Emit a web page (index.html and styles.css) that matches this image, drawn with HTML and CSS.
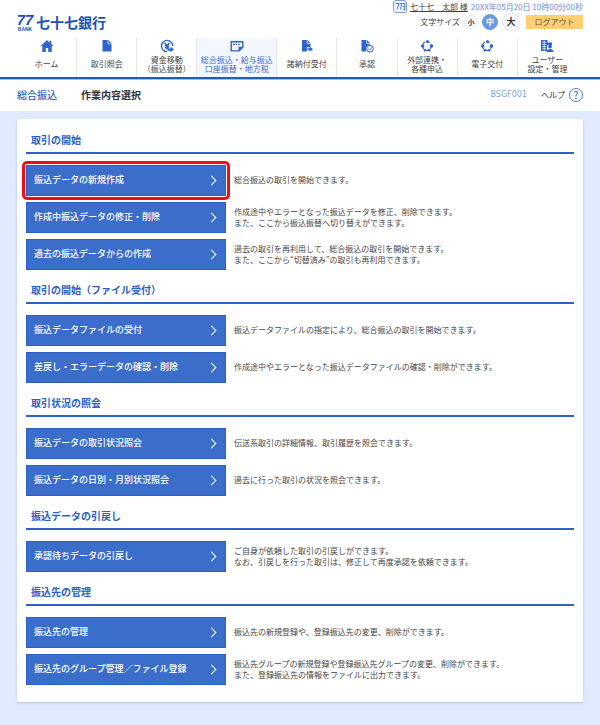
FILE: index.html
```html
<!DOCTYPE html>
<html lang="ja">
<head>
<meta charset="utf-8">
<meta name="viewport" content="width=device-width, initial-scale=1">
<title>作業内容選択</title>
<link rel="stylesheet" href="styles.css">
</head>
<body>
<header class="header">
  <a class="logo" href="#">
    <span class="logo-mark"><span class="logo-num">77</span><span class="logo-bank">BANK</span></span>
    <span class="logo-name">七十七銀行</span>
  </a>
  <div class="header-side">
    <div class="user-row">
      <svg class="user-badge" viewBox="0 0 14 13" aria-hidden="true"><rect x="0.500" y="0.500" width="13" height="12" rx="2.500"/><path d="M2.500 3.500h3.500L4 9.500M6.800 3.500h2L7.500 9.500M9.800 3.500h2v6h-2M10 6.500h1.800"/></svg>
      <a class="user-name" href="#">七十七　太郎 様</a>
      <span class="date">20XX年05月20日 10時00分00秒</span>
    </div>
    <div class="tool-row">
      <span class="size-label">文字サイズ</span>
      <button class="size size-s" type="button">小</button>
      <button class="size size-m" type="button">中</button>
      <button class="size size-l" type="button">大</button>
      <button class="logout" type="button">ログアウト</button>
    </div>
  </div>
</header>
<nav class="nav">
  <a class="tab" href="#">
    <svg class="icon" viewBox="0 0 16 14"><path d="M8 1 1.500 7.200h1.800V13h3.500V9h2.400v4h3.500V7.200h1.800L12.300 5V1.800h-1.800v1.600z"/></svg>
    <span class="tab-label">ホーム</span>
  </a>
  <a class="tab" href="#">
    <svg class="icon" viewBox="0 0 16 14"><path d="M3.500 1h5.800L12.500 4.300V12.500h-9z"/><path class="cut" d="M9 1.200V4.800h3.500"/></svg>
    <span class="tab-label">取引照会</span>
  </a>
  <a class="tab" href="#">
    <svg class="icon" viewBox="0 0 16 14"><path class="line" d="M13.700 7A5.600 5.600 0 1 0 8 12.600M5.500 3.800 8 6.800l2.500-3M8 6.800V10.500M6 7h4M6 8.800h4"/><path d="M8.500 9.500h3V7.800L15 10.500l-3.500 2.800v-1.600h-3z"/></svg>
    <span class="tab-label">資金移動<br>（振込振替）</span>
  </a>
  <a class="tab tab-wide is-active" href="#" aria-current="page">
    <svg class="icon" viewBox="0 0 16 14"><path class="line" d="M2.200 2.700h11.600v5.600l-3.600 3.600H2.200z"/><path d="M9.500 12.500V7.800h5zM4 4.700h2v1.200H4zM6.800 4.700h1.500v1.200H6.800zM9.200 4.700h1.500v1.200H9.200z"/></svg>
    <span class="tab-label">総合振込・給与振込<br>口座振替・地方税</span>
  </a>
  <a class="tab" href="#">
    <svg class="icon" viewBox="0 0 16 14"><path d="M3 1h5.500l3 3.200v4H7.800V12.500H3z"/><path class="cut" d="M8.200 1.200v3.300h3.300"/><path d="M8.500 9.300h2.300V7.800l3.200 2.400-3.200 2.500v-1.500H8.500z"/></svg>
    <span class="tab-label">諸納付受付</span>
  </a>
  <a class="tab" href="#">
    <svg class="icon" viewBox="0 0 16 14"><path d="M2.500 1H8l3 3.200v1.300L7 8v4.500H2.500z"/><path class="cut" d="M7.700 1.200v3.300H11"/><circle class="thin" cx="11" cy="9.700" r="3.400"/><path class="thin" d="m9.300 9.700 1.400 1.300 2.200-2.600"/></svg>
    <span class="tab-label">承認</span>
  </a>
  <a class="tab" href="#">
    <svg class="icon" viewBox="0 0 16 14"><circle class="dash" cx="8" cy="7" r="4.400"/><circle cx="8.500" cy="2.400" r="1.500"/><circle cx="3.700" cy="7" r="1.700"/><circle cx="12.500" cy="7" r="1.700"/><circle cx="6" cy="11.300" r="1.300"/><circle cx="10.200" cy="11.300" r="1.300"/></svg>
    <span class="tab-label">外部連携・<br>各種申込</span>
  </a>
  <a class="tab" href="#">
    <svg class="icon" viewBox="0 0 16 14"><circle class="dash" cx="8" cy="7" r="4.400"/><circle cx="8.500" cy="2.400" r="1.500"/><circle cx="3.700" cy="7" r="1.700"/><circle cx="12.500" cy="7" r="1.700"/><circle cx="6" cy="11.300" r="1.300"/><circle cx="10.200" cy="11.300" r="1.300"/></svg>
    <span class="tab-label">電子交付</span>
  </a>
  <a class="tab" href="#">
    <svg class="icon" viewBox="0 0 16 14"><path d="M2 1h6.500v2.500H13V6H8v6H2z"/><path class="cut" d="M3.200 3.200h4M3.200 5.400h4M3.200 7.600h4M3.200 9.800h4M5.200 1.500v10"/><circle cx="11" cy="7.500" r="1.900"/><path d="M7.500 13c0-4 7-4 7 0z"/></svg>
    <span class="tab-label">ユーザー<br>設定・管理</span>
  </a>
</nav>
<div class="title-bar">
  <span class="category">総合振込</span>
  <h1 class="title">作業内容選択</h1>
  <span class="screen-id">BSGF001</span>
  <a class="help" href="#">ヘルプ<span class="help-mark">?</span></a>
</div>
<main class="main">
  <div class="card">
    <section class="section">
      <h2 class="heading">取引の開始</h2>
      <div class="row"><button class="action is-marked" type="button">振込データの新規作成</button><p class="desc">総合振込の取引を開始できます。</p></div>
      <div class="row"><button class="action" type="button">作成中振込データの修正・削除</button><p class="desc">作成途中やエラーとなった振込データを修正、削除できます。<br>また、ここから振込振替へ切り替えができます。</p></div>
      <div class="row"><button class="action" type="button">過去の振込データからの作成</button><p class="desc">過去の取引を再利用して、総合振込の取引を開始できます。<br>また、ここから“切替済み”の取引も再利用できます。</p></div>
    </section>
    <section class="section">
      <h2 class="heading">取引の開始（ファイル受付）</h2>
      <div class="row"><button class="action" type="button">振込データファイルの受付</button><p class="desc">振込データファイルの指定により、総合振込の取引を開始できます。</p></div>
      <div class="row"><button class="action" type="button">差戻し・エラーデータの確認・削除</button><p class="desc">作成途中やエラーとなった振込データファイルの確認・削除ができます。</p></div>
    </section>
    <section class="section">
      <h2 class="heading">取引状況の照会</h2>
      <div class="row"><button class="action" type="button">振込データの取引状況照会</button><p class="desc">伝送系取引の詳細情報、取引履歴を照会できます。</p></div>
      <div class="row"><button class="action" type="button">振込データの日別・月別状況照会</button><p class="desc">過去に行った取引の状況を照会できます。</p></div>
    </section>
    <section class="section">
      <h2 class="heading">振込データの引戻し</h2>
      <div class="row"><button class="action" type="button">承認待ちデータの引戻し</button><p class="desc">ご自身が依頼した取引の引戻しができます。<br>なお、引戻しを行った取引は、修正して再度承認を依頼できます。</p></div>
    </section>
    <section class="section">
      <h2 class="heading">振込先の管理</h2>
      <div class="row"><button class="action" type="button">振込先の管理</button><p class="desc">振込先の新規登録や、登録振込先の変更、削除ができます。</p></div>
      <div class="row"><button class="action" type="button">振込先のグループ管理／ファイル登録</button><p class="desc">振込先グループの新規登録や登録振込先グループの変更、削除ができます。<br>また、登録振込先の情報をファイルに出力できます。</p></div>
    </section>
  </div>
</main>
</body>
</html>
```
FILE: styles.css
```css
* { box-sizing: border-box; }

body {
  margin: 0;
  min-height: 100vh;
  display: flex;
  flex-direction: column;
  background: #fff;
  color: #444;
  font-family: "Noto Sans CJK JP", "Noto Sans", sans-serif;
  font-size: 8px;
  line-height: 12px;
}

a { color: inherit; text-decoration: none; }
button { font: inherit; border: 0; padding: 0; margin: 0; cursor: pointer; }
h1, h2, p { margin: 0; }

.header {
  display: flex;
  justify-content: space-between;
  height: 38px;
  padding: 0 17px;
}

.logo {
  display: flex;
  align-items: center;
  gap: 3px;
  padding-top: 6px;
  color: #1a4fb4;
}
.logo-mark { display: flex; flex-direction: column; align-items: center; width: 16px; }
.logo-num { font: italic bold 15px/14px "Liberation Sans", sans-serif; }
.logo-bank { font: bold 5px/5px "Liberation Sans", sans-serif; }
.logo-name { font-size: 14px; font-weight: 700; line-height: 20px; }

.header-side { display: flex; flex-direction: column; align-items: flex-end; }
.user-row { display: flex; align-items: center; gap: 3px; height: 13px; color: #6a8fdc; }
.user-badge {
  width: 14px;
  height: 13px;
  fill: #eef4ff;
  stroke: #7d9fe4;
}
.user-badge path { fill: none; stroke: #3f70d0; stroke-width: 0.9; }
.user-name { color: #444; text-decoration: underline; }

.tool-row { display: flex; align-items: center; gap: 4px; height: 16px; margin-top: 1px; }
.size {
  border: 1px solid #dfe8fb;
  border-radius: 50%;
  background: #f8faff;
  color: #333;
  font-weight: 700;
}
.size-s { width: 14px; height: 14px; font-size: 7px; line-height: 12px; }
.size-m { width: 16px; height: 16px; border-color: #6c98e2; background: #6c98e2; color: #fff; line-height: 14px; }
.size-l { width: 18px; height: 18px; font-size: 9px; line-height: 16px; }
.logout { width: 57px; height: 14px; margin-left: 2px; background: #ffcf70; color: #555; line-height: 12px; padding-bottom: 1px; }

.nav {
  display: flex;
  height: 41px;
  margin-bottom: 1px;
  padding: 0 23px 0 17px;
  border-bottom: 2px solid #2059c8;
  box-shadow: 0 1px 0 #a3bdec;
}
.tab {
  flex: 3 1 0;
  display: flex;
  flex-direction: column;
  align-items: center;
  padding: 1px 0 3px;
  border-right: 1px solid #e4e8ec;
  white-space: nowrap;
}
.tab:last-child { border-right: 0; }
.tab-wide { flex-grow: 4; }
.is-active { background: #f4f7ff; color: #3a6ccb; }
.icon { width: 16px; height: 14px; flex: none; fill: #2f64cb; }
.icon .cut { fill: none; stroke: #fff; stroke-width: 0.7; }
.icon .line { fill: none; stroke: #2f64cb; stroke-width: 1.4; }
.icon .thin { fill: #fff; stroke: #2f64cb; stroke-width: 1; }
.icon .dash { fill: none; stroke: #2f64cb; stroke-width: 1.2; stroke-dasharray: 3 2; }
.tab-label { flex: 1; display: flex; align-items: center; text-align: center; line-height: 9px; }

.title-bar { display: flex; align-items: center; height: 31px; padding: 0 17px 2px; }
.category { color: #2b5fc9; font-size: 10px; font-weight: 500; }
.title { margin-left: 24px; color: #333; font-size: 10px; font-weight: 700; }
.screen-id { margin-left: auto; color: #7b9fe2; font-family: "DejaVu Sans", sans-serif; }
.help { display: flex; align-items: center; gap: 4px; margin-left: 14px; color: #333; }
.help-mark {
  width: 14px;
  height: 14px;
  border: 1px solid #4a7bd8;
  border-radius: 50%;
  color: #3f72d4;
  font-size: 10px;
  font-weight: 500;
  line-height: 12px;
  text-align: center;
}

.main { flex: 1; padding: 8px 17px 22px; background: #dfeafe; }
.card {
  padding: 13px 9px 17px;
  background: #fff;
  box-shadow: 0 1px 2px #b4c2de;
}
.section + .section { margin-top: 12px; }
.heading {
  margin-bottom: 11px;
  padding: 0 5px 4px;
  border-bottom: 2px solid #2c60ca;
  color: #2b5fc9;
  font-size: 10px;
  font-weight: 700;
  line-height: 16px;
}
.row { display: flex; align-items: center; gap: 8px; }
.row + .row { margin-top: 6px; }
.action {
  position: relative;
  flex: none;
  display: flex;
  align-items: center;
  justify-content: space-between;
  width: 200px;
  height: 31px;
  padding: 0 10px 2px 7px;
  border: 1px solid #2a5fc9;
  background: #3b6dcb;
  color: #fff;
  font-size: 9px;
  font-weight: 500;
}
.action::before {
  content: "";
  order: 1;
  width: 6px;
  height: 6px;
  margin-top: 2px;
  border: solid #fff;
  border-width: 1px 1px 0 0;
  transform: rotate(45deg);
}
.is-marked::after {
  content: "";
  position: absolute;
  inset: -5px;
  border: 3px solid #f30d12;
  border-radius: 5px;
}
.desc { padding-bottom: 2px; line-height: 11px; }
```
